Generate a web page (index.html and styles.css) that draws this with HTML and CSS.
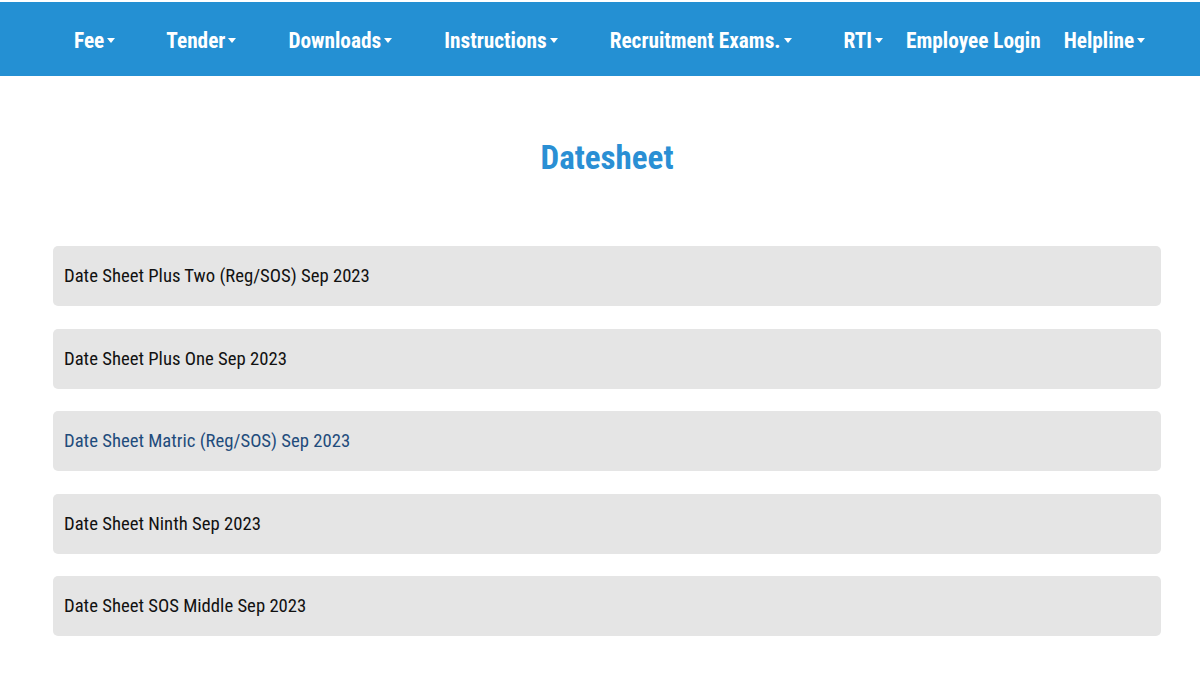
FILE: index.html
```html
<!DOCTYPE html>
<html>
<head>
<meta charset="utf-8">
<link rel="stylesheet" href="styles.css">
</head>
<body>
<nav class="topnav">
  <ul class="menu">
    <li class="item w-fee">Fee<span class="caret"></span></li>
    <li class="item w-tender">Tender<span class="caret"></span></li>
    <li class="item w-down">Downloads<span class="caret"></span></li>
    <li class="item w-inst">Instructions<span class="caret"></span></li>
    <li class="item w-rec">Recruitment Exams.<span class="caret"></span></li>
    <li class="item w-rti">RTI<span class="caret"></span></li>
    <li class="item w-emp">Employee Login</li>
    <li class="item w-help">Helpline<span class="caret"></span></li>
  </ul>
</nav>
<main class="content">
  <h1 class="title">Datesheet</h1>
  <div class="list">
    <a class="row">Date Sheet Plus Two (Reg/SOS) Sep 2023</a>
    <a class="row">Date Sheet Plus One Sep 2023</a>
    <a class="row active">Date Sheet Matric (Reg/SOS) Sep 2023</a>
    <a class="row">Date Sheet Ninth Sep 2023</a>
    <a class="row">Date Sheet SOS Middle Sep 2023</a>
  </div>
</main>
</body>
</html>
```
FILE: styles.css
```css
* { box-sizing: border-box; }
html, body { margin: 0; padding: 0; background: #fff; }
body { font-family: "Roboto Condensed", Roboto, "Liberation Sans", sans-serif; font-stretch: condensed; }
.topnav { margin-top: 2px; height: 74px; padding-top: 2px; background: #2490d3; display: flex; align-items: center; }
.menu { list-style: none; margin: 0; padding: 0 0 0 74px; display: flex; align-items: center; }
.item { color: #fff; font-weight: 700; font-size: 21.3px; display: flex; align-items: center; white-space: nowrap; }
.caret { display: inline-block; width: 0; height: 0; margin-left: 3px; border-left: 4.5px solid transparent; border-right: 4.5px solid transparent; border-top: 5px solid #fff; }
.w-fee { margin-right: 51px; }
.w-tender { margin-right: 52px; }
.w-down { margin-right: 52px; }
.w-inst { margin-right: 52px; }
.w-rec { margin-right: 52px; }
.w-rti { margin-right: 23px; }
.w-emp { margin-right: 23px; }
.content { padding: 0 39px 0 53px; }
.title { margin: 60px 0 0; text-align: center; color: #2a8fd4; font-size: 33px; font-weight: 700; line-height: 44px; }
.list { margin-top: 66px; display: flex; flex-direction: column; gap: 22.5px; }
.row { display: flex; align-items: center; height: 60px; padding: 0 11px; background: #e5e5e5; border-radius: 5px; color: #111; font-size: 18.7px; }
.row.active { color: #1f4c7c; }
```
